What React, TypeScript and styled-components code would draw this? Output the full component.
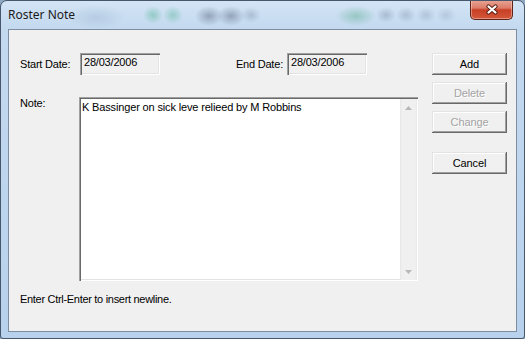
import React from "react";
import styled, { createGlobalStyle } from "styled-components";

const Global = createGlobalStyle`
  html, body { margin: 0; padding: 0; background: #8fa8c2; }
  body { width: 525px; height: 339px; overflow: hidden; }
  * { box-sizing: border-box; }
`;

const Window = styled.div`
  width: 525px;
  height: 339px;
  display: flex;
  flex-direction: column;
  border: 1px solid #46566b;
  border-radius: 7px 7px 3px 3px;
  overflow: hidden;
  background:
    radial-gradient(10px 9px at 152px 14px, rgba(100, 185, 160, 0.55), transparent),
    radial-gradient(10px 9px at 172px 14px, rgba(100, 185, 160, 0.5), transparent),
    radial-gradient(14px 10px at 208px 15px, rgba(80, 95, 120, 0.45), transparent),
    radial-gradient(14px 10px at 230px 15px, rgba(80, 95, 120, 0.45), transparent),
    radial-gradient(10px 8px at 250px 14px, rgba(110, 130, 155, 0.35), transparent),
    radial-gradient(20px 10px at 355px 15px, rgba(100, 175, 150, 0.5), transparent),
    radial-gradient(10px 8px at 385px 14px, rgba(115, 135, 160, 0.4), transparent),
    radial-gradient(10px 8px at 405px 14px, rgba(115, 135, 160, 0.35), transparent),
    radial-gradient(10px 8px at 425px 14px, rgba(115, 135, 160, 0.3), transparent),
    radial-gradient(10px 8px at 445px 14px, rgba(115, 135, 160, 0.25), transparent),
    radial-gradient(30px 12px at 95px 16px, rgba(140, 165, 195, 0.3), transparent),
    linear-gradient(180deg, #d3e4f5 0px, #c3d9ef 28px, #b8d1ec 100%);
  font-family: "Liberation Sans", Arial, sans-serif;
  font-size: 11px;
  color: #000;
`;

const TitleBar = styled.div`
  height: 28px;
  flex: none;
  display: flex;
  justify-content: space-between;
  align-items: flex-start;
`;

const Title = styled.div`
  font-family: "Noto Sans", "Open Sans", sans-serif;
  font-size: 12px;
  line-height: 14px;
  color: #1b1b1b;
  padding: 7px 0 0 7px;
`;

const CloseButton = styled.div`
  width: 43px;
  height: 20px;
  margin: -1px 11px 0 0;
  border: 1px solid #5e2216;
  border-top: none;
  border-radius: 0 0 5px 5px;
  background: linear-gradient(180deg, #e9a595 0%, #dc7c69 42%, #c83f25 52%, #d4583b 100%);
  box-shadow: inset 0 0 0 1px rgba(255, 220, 210, 0.45);
  display: flex;
  align-items: center;
  justify-content: center;
`;

const Client = styled.div`
  flex: 1;
  margin: 0 7px 6px 7px;
  border: 1px solid #7d8ea3;
  background: #f0f0f0;
  padding: 23px 9px 0 11px;
  display: flex;
  gap: 14px;
`;

const Main = styled.div`
  flex: 1;
  display: flex;
  flex-direction: column;
`;

const DateRow = styled.div`
  display: grid;
  grid-template-columns: 60px 80px 127px 80px 1fr;
  align-items: center;
  height: 22px;
`;

const Label = styled.div<{ $right?: boolean }>`
  line-height: 13px;
  letter-spacing: -0.2px;
  text-align: ${(p) => (p.$right ? "right" : "left")};
  padding-right: ${(p) => (p.$right ? "4px" : "0")};
`;

const Field = styled.div`
  height: 22px;
  padding: 3px 0 0 4px;
  line-height: 13px;
  letter-spacing: -0.2px;
  background: #f0f0f0;
  box-shadow: inset 1px 1px #a0a0a0, inset 2px 2px #696969, inset -1px -1px #ffffff,
    inset -2px -2px #e3e3e3;
`;

const NoteRow = styled.div`
  display: flex;
  margin-top: 22px;
`;

const NoteLabel = styled(Label)`
  width: 59px;
`;

const TextBox = styled.div`
  flex: 1;
  height: 184px;
  display: flex;
  background: #fff;
  padding: 2px 1px 1px 2px;
  box-shadow: inset 1px 1px #a0a0a0, inset 2px 2px #696969, inset -1px -1px #ffffff,
    inset -2px -2px #e3e3e3;
`;

const TextContent = styled.div`
  flex: 1;
  padding: 2px 0 0 1px;
  line-height: 13px;
  letter-spacing: -0.15px;
`;

const ScrollBar = styled.div`
  width: 17px;
  display: flex;
  flex-direction: column;
  justify-content: space-between;
  background: linear-gradient(90deg, #e6e6e6 0px, #f0f0f0 2px, #f0f0f0 15px, #e9e9e9 17px);
`;

const ScrollArrow = styled.div`
  height: 17px;
  display: flex;
  align-items: center;
  justify-content: center;
`;

const Hint = styled.div`
  margin-top: 12px;
  line-height: 13px;
  letter-spacing: -0.3px;
`;

const Buttons = styled.div`
  width: 75px;
  display: flex;
  flex-direction: column;
`;

const Button = styled.div<{ $disabled?: boolean; $gap?: number }>`
  height: 22px;
  margin-top: ${(p) => (p.$gap ?? 0)}px;
  display: flex;
  align-items: center;
  justify-content: center;
  padding-bottom: 1px;
  background: #f0f0f0;
  color: ${(p) => (p.$disabled ? "#a3a3a3" : "#000")};
  text-shadow: ${(p) => (p.$disabled ? "1px 1px 0 #ffffff" : "none")};
  letter-spacing: -0.1px;
  box-shadow: inset -1px -1px #696969, inset 1px 1px #e3e3e3, inset -2px -2px #a0a0a0,
    inset 2px 2px #ffffff;
`;

const Arrow = ({ up }: { up?: boolean }) => (
  <svg width="7" height="4" viewBox="0 0 7 4">
    <path d={up ? "M0 4 L3.5 0 L7 4 Z" : "M0 0 L3.5 4 L7 0 Z"} fill="#b8b8b8" />
  </svg>
);

const CloseGlyph = () => (
  <svg width="14" height="11" viewBox="0 0 14 11">
    <g strokeLinecap="round" fill="none">
      <path d="M3.5 2.5 L10.5 8.5 M10.5 2.5 L3.5 8.5" stroke="#5a1c12" strokeWidth="4.2" />
      <path d="M3.5 2.5 L10.5 8.5 M10.5 2.5 L3.5 8.5" stroke="#ffffff" strokeWidth="2.3" />
    </g>
  </svg>
);

export default function App() {
  return (
    <>
      <Global />
      <Window>
        <TitleBar>
          <Title>Roster Note</Title>
          <CloseButton>
            <CloseGlyph />
          </CloseButton>
        </TitleBar>
        <Client>
          <Main>
            <DateRow>
              <Label>Start Date:</Label>
              <Field>28/03/2006</Field>
              <Label $right>End Date:</Label>
              <Field>28/03/2006</Field>
            </DateRow>
            <NoteRow>
              <NoteLabel>Note:</NoteLabel>
              <TextBox>
                <TextContent>K Bassinger on sick leve relieed by M Robbins</TextContent>
                <ScrollBar>
                  <ScrollArrow>
                    <Arrow up />
                  </ScrollArrow>
                  <ScrollArrow>
                    <Arrow />
                  </ScrollArrow>
                </ScrollBar>
              </TextBox>
            </NoteRow>
            <Hint>Enter Ctrl-Enter to insert newline.</Hint>
          </Main>
          <Buttons>
            <Button>Add</Button>
            <Button $disabled $gap={7}>Delete</Button>
            <Button $disabled $gap={7}>Change</Button>
            <Button $gap={19}>Cancel</Button>
          </Buttons>
        </Client>
      </Window>
    </>
  );
}
